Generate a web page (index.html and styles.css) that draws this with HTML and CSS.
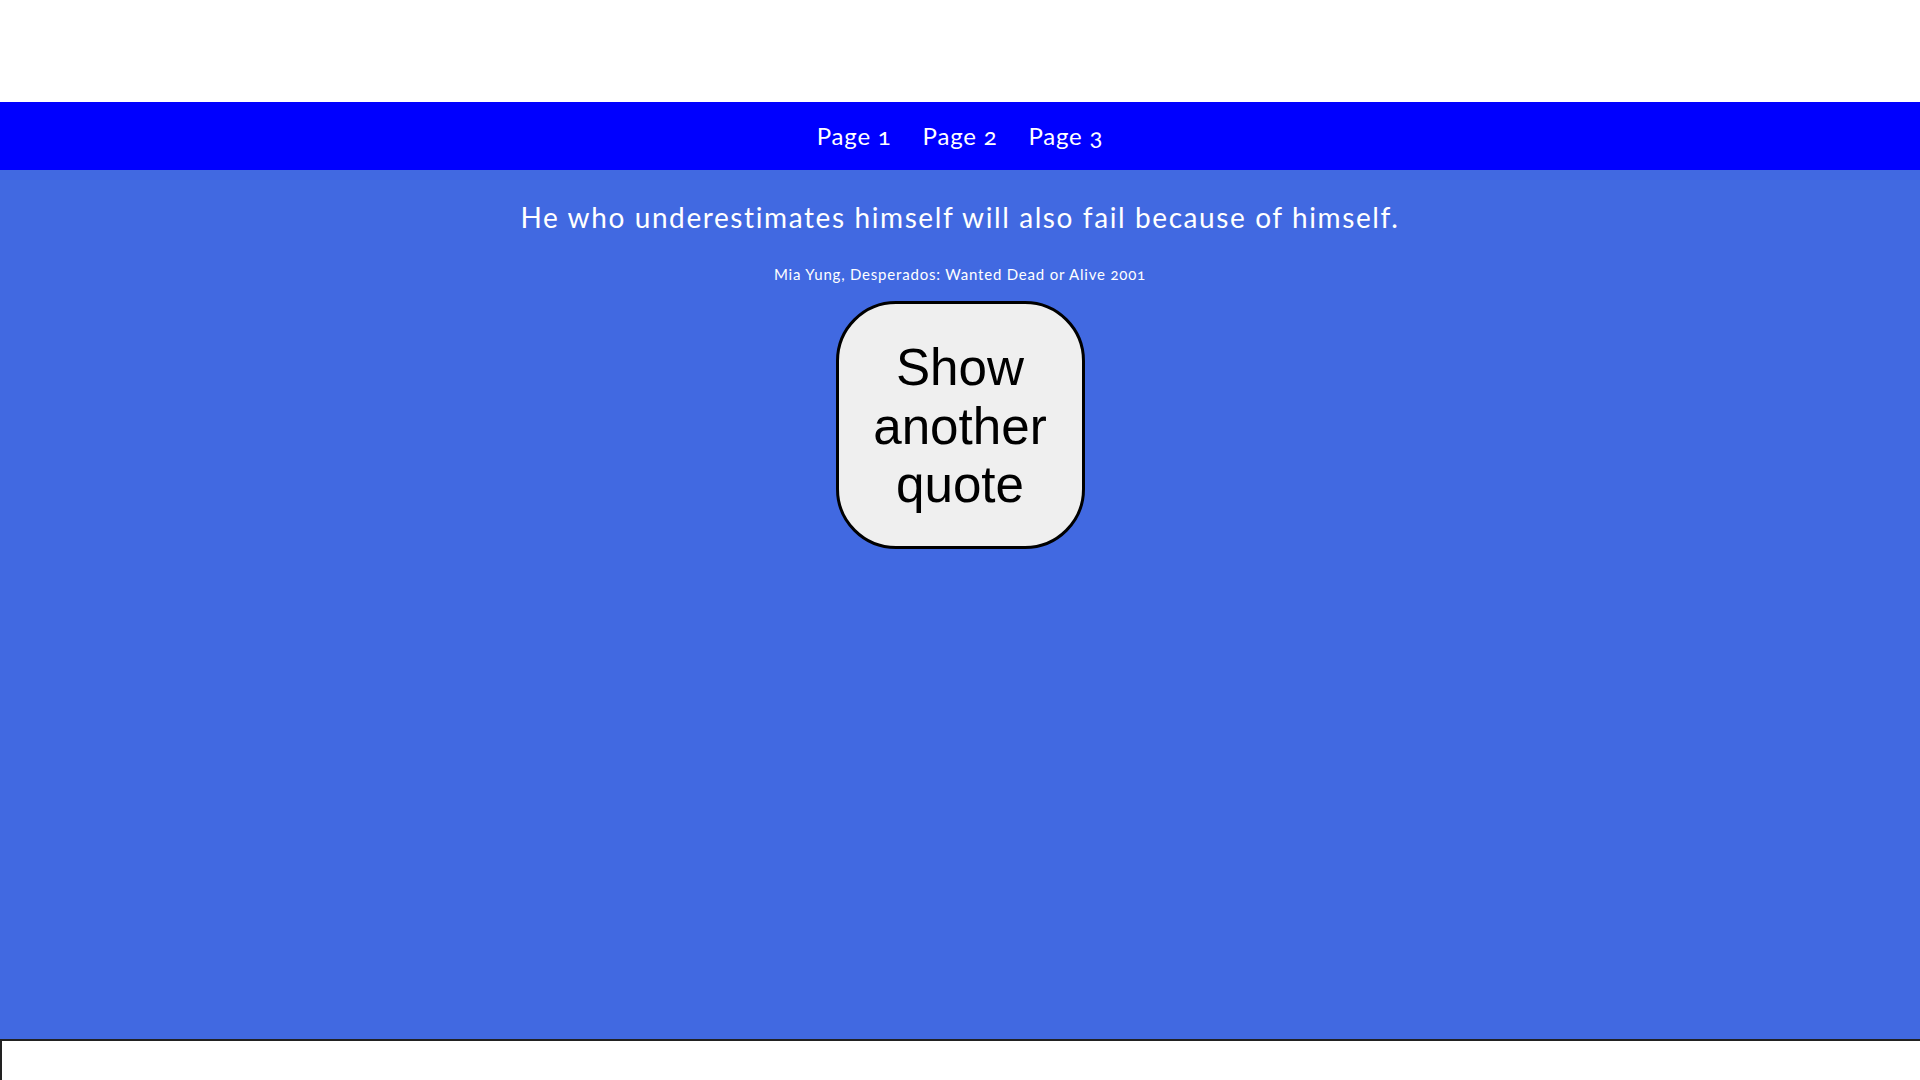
FILE: index.html
```html
<!DOCTYPE html>
<html lang="en">
<head>
<meta charset="utf-8">
<title>Quotes</title>
<link rel="stylesheet" href="styles.css">
</head>
<body>
<header class="top"></header>
<nav class="nav">
  <a class="nav-link" href="#">Page 1</a>
  <a class="nav-link" href="#">Page 2</a>
  <a class="nav-link" href="#">Page 3</a>
</nav>
<main class="main">
  <p class="quote">He who underestimates himself will also fail because of himself.</p>
  <p class="author">Mia Yung, Desperados: Wanted Dead or Alive 2001</p>
  <button class="btn" type="button">Show another quote</button>
</main>
<footer class="foot"></footer>
</body>
</html>
```
FILE: styles.css
```css
html, body {
  margin: 0;
  padding: 0;
  height: 100%;
}
body {
  display: flex;
  flex-direction: column;
  background: #ffffff;
  font-family: Lato, "Open Sans", sans-serif;
  font-variant-numeric: oldstyle-nums;
}
.top {
  height: 102px;
  background: #ffffff;
  flex: none;
}
.nav {
  flex: none;
  height: 68px;
  background: #0000ff;
  display: flex;
  justify-content: center;
  align-items: center;
  gap: 31px;
}
.nav-link {
  color: #ffffff;
  text-decoration: none;
  font-size: 24px;
  line-height: 30px;
  letter-spacing: 0.8px;
}
.main {
  flex: 1;
  background: #4169e1;
  display: flex;
  flex-direction: column;
  align-items: center;
  padding-top: 30px;
  color: #ffffff;
}
.quote {
  margin: 0;
  font-size: 28px;
  line-height: 34px;
  letter-spacing: 1.6px;
}
.author {
  margin: 31px 0 0;
  font-size: 15px;
  line-height: 18px;
  letter-spacing: 0.8px;
}
.btn {
  margin-top: 18px;
  width: 249px;
  height: 248px;
  box-sizing: border-box;
  border: 3px solid #000000;
  border-radius: 60px;
  background: #efefef;
  color: #000000;
  font-family: "Liberation Sans", Arial, sans-serif;
  font-size: 51.2px;
  line-height: 58.8px;
  padding: 4px 0 0;
}
.foot {
  flex: none;
  height: 39px;
  border-top: 2px solid #222222;
  border-left: 2px solid #222222;
  background: #ffffff;
}
```
